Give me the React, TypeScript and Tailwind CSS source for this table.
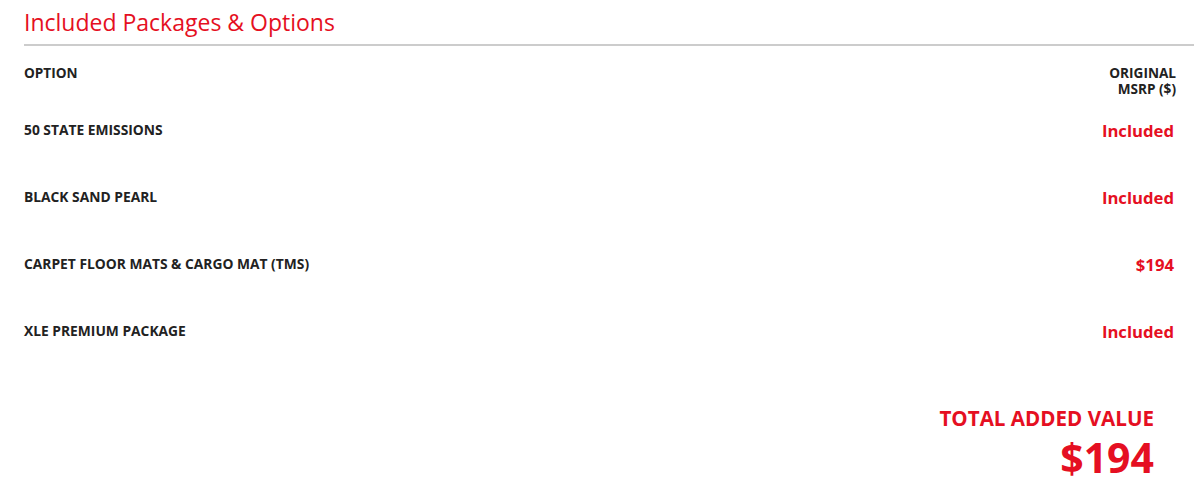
import React from "react";

const rows = [
  { name: "50 STATE EMISSIONS", value: "Included" },
  { name: "BLACK SAND PEARL", value: "Included" },
  { name: "CARPET FLOOR MATS & CARGO MAT (TMS)", value: "$194" },
  { name: "XLE PREMIUM PACKAGE", value: "Included" },
];

export default function App() {
  return (
    <div className="w-[1200px] h-[495px] bg-white pl-6 pr-[6px] overflow-hidden" style={{ fontFamily: '"Open Sans", sans-serif' }}>
      <h2 className="text-[23px] leading-[30px] pt-[7px] pb-[7px] text-[#e50f22] font-normal border-b-2 border-[#cccccc]">
        Included Packages &amp; Options
      </h2>
      <div className="pr-[18px]">
        <div className="flex justify-between pt-[19px] text-[13.6px] leading-[16px] font-bold text-[#222]">
          <div>OPTION</div>
          <div className="text-right">ORIGINAL<br />MSRP ($)</div>
        </div>
        <div>
          {rows.map((r) => (
            <div key={r.name} className="flex justify-between items-center h-[67px]">
              <div className="text-[13.8px] font-bold text-[#222]">{r.name}</div>
              <div className="text-[16.7px] font-bold text-[#e50f22] pr-[2px]">{r.value}</div>
            </div>
          ))}
        </div>
        <div className="flex flex-col items-end pr-[22px] mt-[40px]">
          <div className="text-[20.6px] leading-[26px] font-bold text-[#e50f22]">TOTAL ADDED VALUE</div>
          <div className="text-[41px] leading-[52px] font-bold text-[#e50f22]">$194</div>
        </div>
      </div>
    </div>
  );
}
